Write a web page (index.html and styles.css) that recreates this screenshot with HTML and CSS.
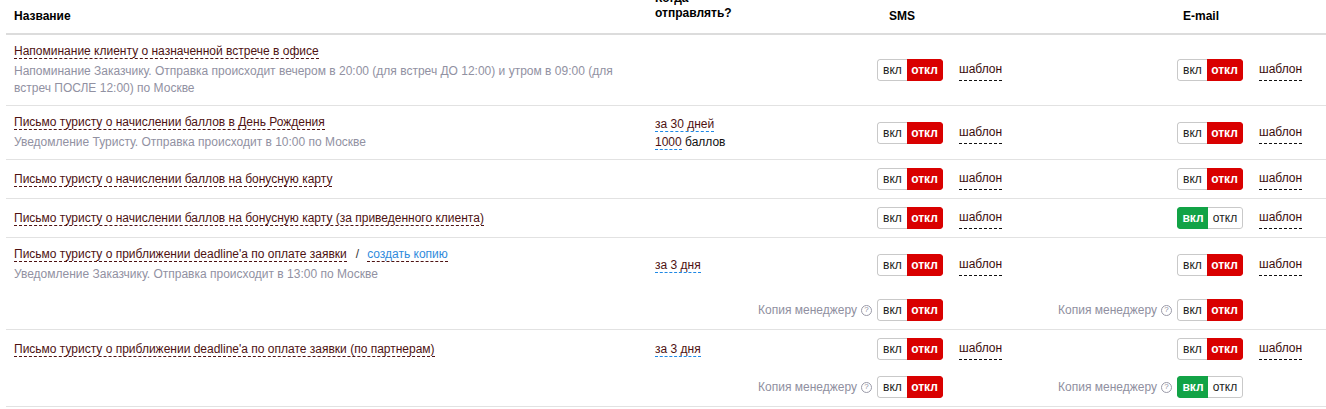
FILE: index.html
```html
<!DOCTYPE html>
<html lang="ru">
<head>
<meta charset="utf-8">
<title>Уведомления</title>
<link rel="stylesheet" href="styles.css">
</head>
<body>
<div class="table">
  <div class="thead">
    <div class="th th-name">Название</div>
    <div class="th th-when">Когда отправлять?</div>
    <div class="th th-ch th-sms"><span class="th-label">SMS</span></div>
    <div class="th th-ch th-email"><span class="th-label">E-mail</span></div>
  </div>

  <div class="row">
    <div class="c-name">
      <div class="title"><span class="dash">Напоминание клиенту о назначенной встрече в офисе</span></div>
      <div class="desc">Напоминание Заказчику. Отправка происходит вечером в 20:00 (для встреч ДО 12:00) и утром в 09:00 (для встреч ПОСЛЕ 12:00) по Москве</div>
    </div>
    <div class="c-when"></div>
    <div class="c-ch"><div class="sw"><span class="seg seg-on">вкл</span><span class="seg seg-off active-off">откл</span></div><span class="tpl">шаблон</span></div>
    <div class="c-ch"><div class="sw"><span class="seg seg-on">вкл</span><span class="seg seg-off active-off">откл</span></div><span class="tpl">шаблон</span></div>
  </div>

  <div class="row">
    <div class="c-name">
      <div class="title"><span class="dash">Письмо туристу о начислении баллов в День Рождения</span></div>
      <div class="desc">Уведомление Туристу. Отправка происходит в 10:00 по Москве</div>
    </div>
    <div class="c-when">
      <div><span class="when-link">за 30 дней</span></div>
      <div><span class="when-link">1000</span> баллов</div>
    </div>
    <div class="c-ch"><div class="sw"><span class="seg seg-on">вкл</span><span class="seg seg-off active-off">откл</span></div><span class="tpl">шаблон</span></div>
    <div class="c-ch"><div class="sw"><span class="seg seg-on">вкл</span><span class="seg seg-off active-off">откл</span></div><span class="tpl">шаблон</span></div>
  </div>

  <div class="row">
    <div class="c-name">
      <div class="title"><span class="dash">Письмо туристу о начислении баллов на бонусную карту</span></div>
    </div>
    <div class="c-when"></div>
    <div class="c-ch"><div class="sw"><span class="seg seg-on">вкл</span><span class="seg seg-off active-off">откл</span></div><span class="tpl">шаблон</span></div>
    <div class="c-ch"><div class="sw"><span class="seg seg-on">вкл</span><span class="seg seg-off active-off">откл</span></div><span class="tpl">шаблон</span></div>
  </div>

  <div class="row">
    <div class="c-name">
      <div class="title"><span class="dash">Письмо туристу о начислении баллов на бонусную карту (за приведенного клиента)</span></div>
    </div>
    <div class="c-when"></div>
    <div class="c-ch"><div class="sw"><span class="seg seg-on">вкл</span><span class="seg seg-off active-off">откл</span></div><span class="tpl">шаблон</span></div>
    <div class="c-ch"><div class="sw"><span class="seg seg-on active-on">вкл</span><span class="seg seg-off">откл</span></div><span class="tpl">шаблон</span></div>
  </div>

  <div class="row">
    <div class="c-name">
      <div class="title"><span class="dash">Письмо туристу о приближении deadline'а по оплате заявки</span><span class="sep">/</span><span class="copy-link">создать копию</span></div>
      <div class="desc">Уведомление Заказчику. Отправка происходит в 13:00 по Москве</div>
    </div>
    <div class="c-when"><span class="when-link">за 3 дня</span></div>
    <div class="c-ch"><div class="sw"><span class="seg seg-on">вкл</span><span class="seg seg-off active-off">откл</span></div><span class="tpl">шаблон</span></div>
    <div class="c-ch"><div class="sw"><span class="seg seg-on">вкл</span><span class="seg seg-off active-off">откл</span></div><span class="tpl">шаблон</span></div>
    <div class="c-copy c-copy-sms"><span class="copy-label">Копия менеджеру</span><span class="help">?</span><div class="sw"><span class="seg seg-on">вкл</span><span class="seg seg-off active-off">откл</span></div></div>
    <div class="c-copy c-copy-email"><span class="copy-label">Копия менеджеру</span><span class="help">?</span><div class="sw"><span class="seg seg-on">вкл</span><span class="seg seg-off active-off">откл</span></div></div>
  </div>

  <div class="row">
    <div class="c-name">
      <div class="title"><span class="dash">Письмо туристу о приближении deadline'а по оплате заявки (по партнерам)</span></div>
    </div>
    <div class="c-when"><span class="when-link">за 3 дня</span></div>
    <div class="c-ch"><div class="sw"><span class="seg seg-on">вкл</span><span class="seg seg-off active-off">откл</span></div><span class="tpl">шаблон</span></div>
    <div class="c-ch"><div class="sw"><span class="seg seg-on">вкл</span><span class="seg seg-off active-off">откл</span></div><span class="tpl">шаблон</span></div>
    <div class="c-copy c-copy-sms"><span class="copy-label">Копия менеджеру</span><span class="help">?</span><div class="sw"><span class="seg seg-on">вкл</span><span class="seg seg-off active-off">откл</span></div></div>
    <div class="c-copy c-copy-email"><span class="copy-label">Копия менеджеру</span><span class="help">?</span><div class="sw"><span class="seg seg-on active-on">вкл</span><span class="seg seg-off">откл</span></div></div>
  </div>
</div>
</body>
</html>
```
FILE: styles.css
```css
html, body {
  margin: 0;
  padding: 0;
  background: #fff;
}
body {
  font-family: "Liberation Sans", Arial, sans-serif;
  font-size: 12px;
  color: #222;
  overflow: hidden;
}
.table {
  margin: -9px 0 0 6px;
  width: 1320px;
}
.thead,
.row {
  display: grid;
  grid-template-columns: 641px 100px 300px 1fr;
}
.thead {
  border-bottom: 2px solid #dcdcdc;
}
.th {
  font-weight: bold;
  color: #000;
  align-self: end;
}
.th-name {
  padding: 0 8px 9px;
  line-height: 16px;
}
.th-when {
  padding: 0 8px 12px;
  line-height: 15px;
}
.th-ch {
  padding-bottom: 9px;
  line-height: 16px;
}
.th-sms {
  padding-left: 5px;
}
.th-email {
  padding-left: 4px;
}
.th-label {
  display: block;
  width: 300px;
  text-align: center;
}
.row {
  padding: 8px 0;
  row-gap: 16px;
  border-bottom: 1px solid #e2e2e2;
}
.c-name {
  grid-column: 1;
  grid-row: 1;
  align-self: center;
  padding: 0 24px 0 8px;
}
.title {
  line-height: 17px;
  color: #4e1212;
}
.dash {
  border-bottom: 1px dashed #4e1212;
}
.sep {
  margin: 0 8px 0 9px;
  color: #333;
}
.copy-link {
  color: #2f8bdc;
  border-bottom: 1px dashed #4e1212;
}
.desc {
  margin-top: 3px;
  line-height: 17px;
  color: #9191a2;
}
.c-when {
  grid-column: 2;
  grid-row: 1;
  align-self: center;
  padding: 0 8px;
  line-height: 18px;
  color: #111;
}
.when-link {
  color: #4e1212;
  border-bottom: 1px dashed #1e88e5;
}
.c-ch {
  grid-row: 1;
  align-self: center;
  display: flex;
  align-items: center;
  padding-left: 130px;
}
.tpl {
  margin-left: 16px;
  color: #3a0c0c;
  line-height: 15px;
  padding: 3px 0;
  border-bottom: 1px dashed #111;
}
.sw {
  display: flex;
  height: 22px;
  border-radius: 3px;
  overflow: hidden;
  flex: none;
}
.seg {
  display: flex;
  align-items: center;
  justify-content: center;
  box-sizing: border-box;
  border: 1px solid #c9c9c9;
  background: #fff;
  color: #222;
}
.seg-on {
  width: 30px;
  border-right: none;
  border-radius: 3px 0 0 3px;
}
.seg-off {
  width: 36px;
  border-left: none;
  border-radius: 0 3px 3px 0;
}
.active-off {
  background: #d90000;
  border-color: #d90000;
  color: #fff;
  font-weight: bold;
}
.active-on {
  width: 31px;
  background: #12a346;
  border-color: #12a346;
  color: #fff;
  font-weight: bold;
}
.active-on + .seg-off {
  width: 35px;
}
.c-copy {
  grid-row: 2;
  display: flex;
  align-items: center;
  justify-content: flex-end;
  width: 196px;
}
.c-copy-sms {
  grid-column: 3;
}
.c-copy-email {
  grid-column: 4;
}
.copy-label {
  color: #8f8fa0;
  white-space: nowrap;
}
.help {
  display: inline-flex;
  align-items: center;
  justify-content: center;
  box-sizing: border-box;
  width: 11px;
  height: 11px;
  margin: 0 5px 0 4px;
  border: 1px solid #9a9aa8;
  border-radius: 50%;
  font-size: 8px;
  line-height: 1;
  color: #8f8fa0;
}
```
